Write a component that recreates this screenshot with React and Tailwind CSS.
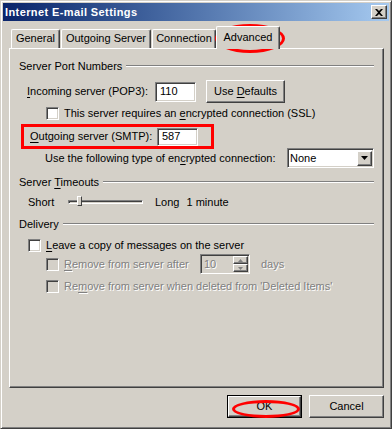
import React from "react";

const FONT = { fontFamily: "Tahoma, 'Liberation Sans', Arial, sans-serif" };

// classic sunken field edge
const SUNKEN =
  "border border-t-[#808080] border-l-[#808080] border-b-white border-r-white shadow-[inset_1px_1px_0_#404040,inset_-1px_-1px_0_#d4d0c8]";
// classic raised button edge
const RAISED =
  "border border-t-white border-l-white border-b-[#404040] border-r-[#404040] shadow-[inset_-1px_-1px_0_#808080]";

function U({ children }) {
  return <span className="underline underline-offset-[2px]">{children}</span>;
}

function Checkbox({ disabled }) {
  return (
    <span
      className={`inline-block w-[13px] h-[13px] shrink-0 ${SUNKEN} ${
        disabled ? "bg-[#d4d0c8]" : "bg-white"
      }`}
    />
  );
}

function GroupTitle({ children }) {
  return (
    <div className="flex items-center gap-[4px] h-[14px]">
      <span className="whitespace-nowrap">{children}</span>
      <div className="flex-1 h-[2px] border-t border-t-[#808080] border-b border-b-white" />
    </div>
  );
}

function Tab({ label, active, w }) {
  if (active) {
    return (
      <div
        className={`relative z-10 h-[23px] ${w} bg-[#d4d0c8] border-t border-l border-white border-r border-r-[#404040] shadow-[inset_-1px_0_0_#808080] rounded-t-[2px] flex items-start justify-center pt-[4px] -mb-[1px]`}
      >
        {label}
      </div>
    );
  }
  return (
    <div
      className={`h-[19px] ${w} bg-[#d4d0c8] border-t border-l border-white border-r border-r-[#404040] shadow-[inset_-1px_0_0_#808080] rounded-t-[2px] flex items-start justify-center pt-[2px]`}
    >
      {label}
    </div>
  );
}

function SpinArrow({ up }) {
  return (
    <div className={`w-[15px] h-[8px] ${RAISED} flex items-center justify-center`}>
      <svg width="5" height="3" viewBox="0 0 5 3">
        <path d={up ? "M0 3h5L2.5 0z" : "M0 0h5L2.5 3z"} fill="#808080" />
      </svg>
    </div>
  );
}

export default function App() {
  return (
    <div
      className="w-[392px] h-[429px] bg-[#d4d0c8] text-[11px] text-black leading-[13px] flex flex-col border border-t-[#d4d0c8] border-l-[#d4d0c8] border-r-[#404040] border-b-[#404040] shadow-[inset_1px_1px_0_white,inset_-1px_-1px_0_#808080] p-[2px] overflow-hidden relative select-none"
      style={FONT}
    >
      {/* title bar */}
      <div className="h-[18px] flex items-center justify-between pl-[2px] pr-[2px] bg-gradient-to-r from-[#0a246a] to-[#a6caf0]">
        <span className="text-white font-bold text-[11px] tracking-[0.4px]">
          Internet E-mail Settings
        </span>
        <div
          className={`w-[16px] h-[14px] bg-[#d4d0c8] ${RAISED} flex items-center justify-center`}
        >
          <svg width="8" height="7" viewBox="0 0 8 7">
            <path
              d="M0 0h2l2 2 2-2h2L5 3.5 8 7H6L4 5 2 7H0l3-3.5z"
              fill="black"
            />
          </svg>
        </div>
      </div>

      {/* tabs */}
      <div className="flex items-end pl-[8px] mt-[4px] h-[23px]">
        <Tab label="General" w="w-[49px]" />
        <div className="w-[1px]" />
        <Tab label="Outgoing Server" w="w-[90px]" />
        <div className="w-[1px]" />
        <Tab label="Connection" w="w-[64px]" />
        <Tab label="Advanced" active w="w-[64px]" />
      </div>

      {/* tab panel */}
      <div className="ml-[6px] w-[375px] h-[340px] border border-t-white border-l-white border-r-[#404040] border-b-[#404040] shadow-[inset_-1px_-1px_0_#808080] pl-[9px] pr-[9px] pt-[10px]">
        <GroupTitle>Server Port Numbers</GroupTitle>

        <div className="flex items-center mt-[7px] pl-[8px] h-[23px]">
          <span className="w-[128px]">
            <U>I</U>ncoming server (POP3):
          </span>
          <div className={`w-[41px] h-[20px] bg-white ${SUNKEN} flex items-center pl-[4px]`}>
            110
          </div>
          <div
            className={`ml-[10px] w-[79px] h-[23px] ${RAISED} flex items-center justify-center`}
          >
            <span>
              Use <U>D</U>efaults
            </span>
          </div>
        </div>

        <div className="flex items-center gap-[5px] mt-[3px] pl-[27px] h-[14px]">
          <Checkbox />
          <span>
            This server requires an <U>e</U>ncrypted connection (SSL)
          </span>
        </div>

        <div className="mt-[4px] ml-[2px] w-[193px] h-[25px] border-[3px] border-[#ff0000] flex items-center pl-[6px]">
          <span className="w-[127px]">
            <U>O</U>utgoing server (SMTP):
          </span>
          <div className={`w-[41px] h-[18px] bg-white ${SUNKEN} flex items-center pl-[4px]`}>
            587
          </div>
        </div>

        <div className="flex items-center -mt-[1px] pl-[26px] h-[20px]">
          <span className="w-[242px]">
            Use the following type of en<U>c</U>rypted connection:
          </span>
          <div className={`w-[87px] h-[20px] bg-white ${SUNKEN} flex items-center justify-between pr-[1px]`}>
            <span className="pl-[2px]">None</span>
            <div className={`w-[15px] h-[15px] bg-[#d4d0c8] ${RAISED} flex items-center justify-center`}>
              <svg width="7" height="4" viewBox="0 0 7 4">
                <path d="M0 0h7L3.5 4z" fill="black" />
              </svg>
            </div>
          </div>
        </div>

        <div className="mt-[7px]">
          <GroupTitle>
            Server <U>T</U>imeouts
          </GroupTitle>
        </div>

        <div className="flex items-center mt-[5px] pl-[9px] h-[16px]">
          <span className="w-[40px]">Short</span>
          <div className="relative w-[75px] h-[16px] flex items-center">
            <div className="w-full h-[4px] border border-t-[#808080] border-l-[#808080] border-b-white border-r-white shadow-[inset_1px_1px_0_#404040]" />
            <div className="absolute left-[9px] top-[2px] w-[5px] h-[10px] bg-[#d4d0c8] border border-t-white border-l-white border-r-[#404040] border-b-[#404040]" />
          </div>
          <span className="ml-[12px]">Long</span>
          <span className="ml-[7px]">1 minute</span>
        </div>

        <div className="mt-[7px]">
          <GroupTitle>Delivery</GroupTitle>
        </div>

        <div className="flex items-center gap-[5px] mt-[7px] pl-[9px] h-[14px]">
          <Checkbox />
          <span>
            <U>L</U>eave a copy of messages on the server
          </span>
        </div>

        <div className="flex items-center mt-[2px] pl-[27px] h-[20px] text-[#808080] [text-shadow:1px_1px_0_white]">
          <Checkbox disabled />
          <span className="ml-[5px] w-[136px]">
            <U>R</U>emove from server after
          </span>
          <div className={`w-[50px] h-[20px] bg-[#d4d0c8] ${SUNKEN} flex items-center justify-between pr-[1px]`}>
            <span className="pl-[3px]">10</span>
            <div className="flex flex-col">
              <SpinArrow up />
              <SpinArrow />
            </div>
          </div>
          <span className="ml-[11px]">days</span>
        </div>

        <div className="flex items-center gap-[5px] mt-[5px] pl-[27px] h-[14px] text-[#808080] [text-shadow:1px_1px_0_white]">
          <Checkbox disabled />
          <span>
            Re<U>m</U>ove from server when deleted from 'Deleted Items'
          </span>
        </div>
      </div>

      {/* buttons */}
      <div className="flex justify-end gap-[7px] mt-[7px] pr-[5px]">
        <div className="w-[75px] h-[23px] border border-black">
          <div className={`w-full h-full ${RAISED} flex items-center justify-center`}>
            OK
          </div>
        </div>
        <div className={`w-[75px] h-[23px] ${RAISED} flex items-center justify-center`}>
          Cancel
        </div>
      </div>

      {/* red annotation ellipses */}
      <div className="absolute left-[214px] top-[23px] w-[70px] h-[29px] rounded-[50%] border-[3px] border-[#ff0000] pointer-events-none" />
      <div className="absolute left-[231px] top-[399px] w-[68px] h-[18px] rounded-[50%] border-[3px] border-[#ff0000] pointer-events-none" />
    </div>
  );
}
